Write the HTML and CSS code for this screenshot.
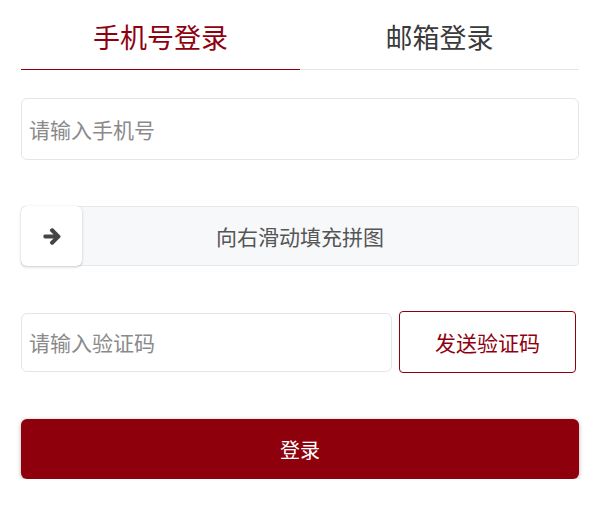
FILE: index.html
```html
<!DOCTYPE html>
<html lang="zh-CN">
<head>
<meta charset="utf-8">
<title>登录</title>
<link rel="stylesheet" href="styles.css">
</head>
<body>
<div class="login">
  <div class="tabs">
    <div class="tab active">手机号登录</div>
    <div class="tab">邮箱登录</div>
  </div>
  <input class="field phone" type="text" placeholder="请输入手机号">
  <div class="slider">
    <div class="slider-text">向右滑动填充拼图</div>
    <div class="handle">
      <svg class="arrow" viewBox="-30 -10 508 532" aria-hidden="true"><path fill="#444" stroke="#444" stroke-width="36" stroke-linejoin="round" d="M190.5 66.9l22.2-22.2c9.4-9.4 24.6-9.4 33.9 0L441 239c9.4 9.4 9.4 24.6 0 33.9L246.6 467.3c-9.4 9.4-24.6 9.4-33.9 0l-22.2-22.2c-9.5-9.5-9.3-25 .4-34.3L311.4 296H24c-13.3 0-24-10.700-24-24v-32c0-13.3 10.7-24 24-24h287.4L190.9 101.2c-9.8-9.3-10-24.8-.4-34.3z"/></svg>
    </div>
  </div>
  <div class="code-row">
    <input class="field code" type="text" placeholder="请输入验证码">
    <button class="send" type="button">发送验证码</button>
  </div>
  <button class="submit" type="button">登录</button>
</div>
</body>
</html>
```
FILE: styles.css
```css
* { box-sizing: border-box; }
html, body { margin: 0; background: #fff; }
body {
  font-family: "Microsoft YaHei", "Noto Sans CJK SC", "Noto Sans", sans-serif;
}
.login {
  padding: 0 20px 0 21px;
}
.tabs {
  display: flex;
  border-bottom: 1px solid #e4e4e4;
}
.tab {
  flex: 1;
  height: 69px;
  padding-top: 4px;
  line-height: 65px;
  text-align: center;
  font-size: 27px;
  color: #3a3a3a;
}
.tab.active {
  color: #8f000f;
  border-bottom: 1px solid #8f000f;
  margin-bottom: -1px;
  height: 70px;
}
.field {
  display: block;
  width: 100%;
  border: 1px solid #e5e5e5;
  border-radius: 6px;
  background: #fff;
  padding: 0 7px;
  font-family: inherit;
  font-size: 21px;
  color: #333;
  outline: none;
}
.field::placeholder { color: #8a8a8a; }
.phone {
  margin-top: 28px;
  height: 62px;
}
.slider {
  position: relative;
  margin-top: 46px;
  height: 60px;
  border: 1px solid #e6e8eb;
  border-radius: 4px;
  background: #f7f8fa;
}
.slider-text {
  text-align: center;
  line-height: 58px;
  font-size: 21px;
  color: #555;
}
.handle {
  position: absolute;
  left: -1px;
  top: -1px;
  width: 61px;
  height: 60px;
  background: #fff;
  border-radius: 6px;
  box-shadow: 0 1px 3px rgba(0, 0, 0, 0.22);
  display: flex;
  align-items: center;
  justify-content: center;
}
.arrow {
  width: 18px;
  height: 19px;
}
.code-row {
  display: flex;
  align-items: center;
  gap: 7px;
  margin-top: 45px;
  padding-right: 3px;
}
.code {
  flex: 1;
  height: 59px;
}
.send {
  width: 177px;
  height: 62px;
  border: 1px solid #8f000f;
  border-radius: 4px;
  background: #fff;
  color: #8f000f;
  font-family: inherit;
  font-size: 21px;
  padding: 0;
}
.submit {
  display: block;
  width: 100%;
  height: 60px;
  margin-top: 46px;
  border: none;
  border-radius: 6px;
  background: #8f000d;
  color: #fff;
  font-family: inherit;
  font-size: 20px;
  box-shadow: 0 1px 4px rgba(0, 0, 0, 0.3);
  padding: 0;
}
```
